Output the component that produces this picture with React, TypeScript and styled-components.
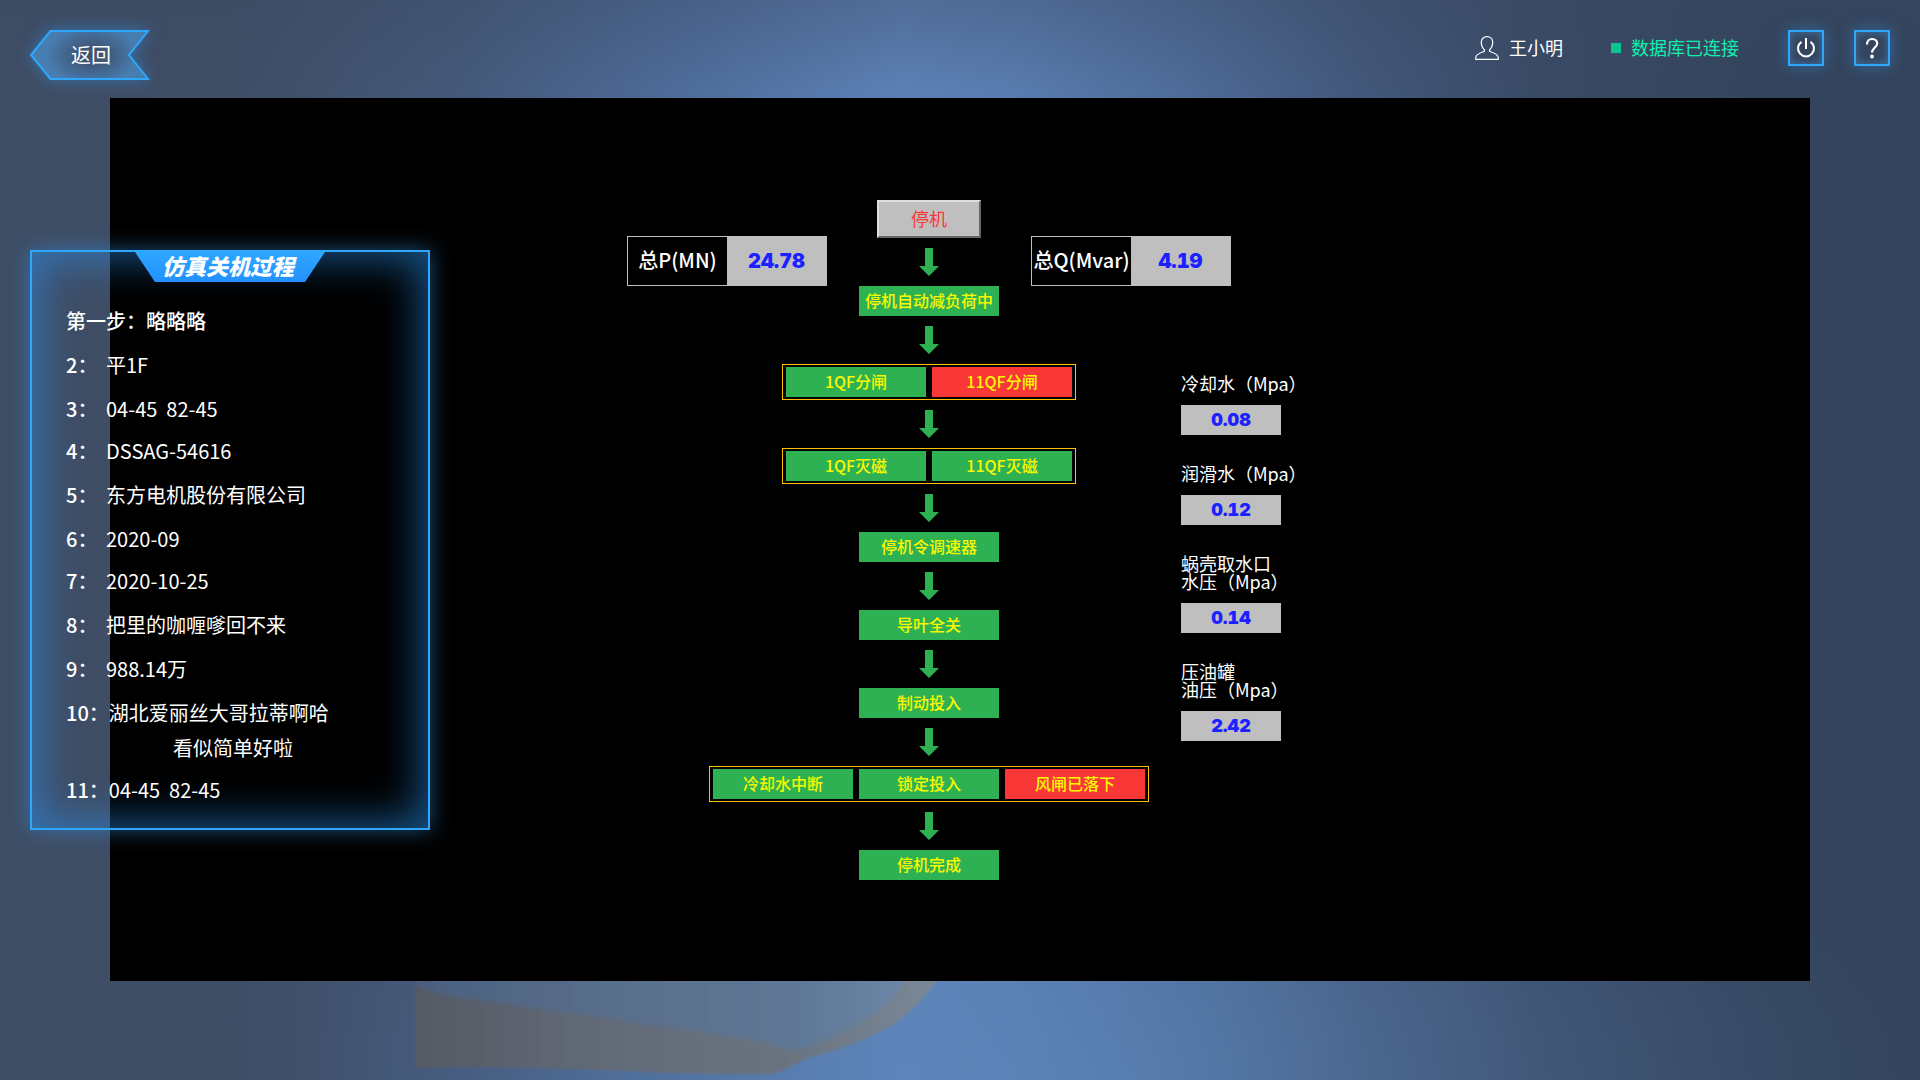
import React from "react";
import styled, { createGlobalStyle, css } from "styled-components";

const cjk = '"Noto Sans CJK SC", "Noto Sans", sans-serif';

const GlobalStyle = createGlobalStyle`
  *, *::before, *::after { box-sizing: border-box; }
  html, body, #root { height: 100%; margin: 0; }
  body { background: #3d4b63; color: #fff; font-family: ${cjk}; }
  button { font-family: inherit; cursor: pointer; }
  ul, ol, dl, dd { margin: 0; padding: 0; list-style: none; }
`;

const Page = styled.div`
  display: flex;
  flex-direction: column;
  position: relative;
  isolation: isolate;
  overflow: hidden;
  min-height: 100vh;
  background:
    linear-gradient(180deg, rgba(58, 72, 96, 0.35) 0, rgba(58, 72, 96, 0) 90px),
    radial-gradient(ellipse 42% 30% at 58% 100%, rgba(98, 146, 200, 0.4), rgba(98, 146, 200, 0)),
    linear-gradient(90deg, #3f4d65 0%, #3f4d66 12%, #44597a 24%, #4e6d9b 36%, #5c80b5 47%, #587bae 53%, #4d6b97 62%, #42577a 71%, #394a66 80%, #34445d 92%, #34445e 100%);
`;

const Backdrop = styled.svg`
  position: absolute;
  z-index: -1;
  left: 21%;
  bottom: 0;
  width: 560px;
  height: 120px;
`;

const Header = styled.header`
  display: flex;
  justify-content: space-between;
  align-items: flex-start;
  height: 98px;
  padding: 30px 30px 0;
`;

const BackButton = styled.button`
  position: relative;
  display: grid;
  place-items: center;
  width: 120px;
  height: 50px;
  padding: 0 0 0 2px;
  border: 0;
  background: none;
  color: #fff;
  font-size: 20px;
  line-height: 30px;
`;

const BackShape = styled.svg`
  position: absolute;
  inset: 0;
  z-index: -1;
  overflow: visible;
  filter: drop-shadow(0 0 8px rgba(46, 143, 220, 0.6));
`;

const Tools = styled.div`
  display: flex;
  align-items: center;
  height: 36px;
  font-size: 18px;
  line-height: 26px;
`;

const ToolText = styled.span`
  padding-bottom: 2px;
`;

const User = styled.div`
  display: flex;
  align-items: center;
  gap: 10px;
  margin-right: 48px;
`;

const Status = styled.div`
  display: flex;
  align-items: center;
  gap: 10px;
  margin-right: 49px;
  color: #0ff0ae;
  &::before {
    content: "";
    width: 10px;
    height: 10px;
    background: #0cc48f;
  }
`;

const IconButton = styled.button`
  display: grid;
  place-items: center;
  width: 36px;
  height: 36px;
  padding: 0;
  border: 2px solid #2ea7ff;
  background: transparent;
  color: #fff;
  box-shadow: 0 0 15px rgba(46, 143, 220, 0.5), inset 0 0 8px rgba(70, 150, 220, 0.6);
  & + & { margin-left: 30px; }
`;

const Stage = styled.main`
  display: flex;
  justify-content: center;
  align-items: flex-start;
  position: relative;
  flex: 1;
  margin: 0 110px 99px;
  padding-top: 102px;
  background: #000;
`;

const Board = styled.div`
  display: grid;
  grid-template-columns: 82px 118px 204px 118px 32px 112px;
  align-items: start;
  justify-items: center;
`;

const Flow = styled.ol`
  grid-area: 1 / 2 / 2 / 5;
  display: flex;
  flex-direction: column;
  align-items: center;
  gap: 10px;
`;

const FlowStep = styled.li`
  display: flex;
  flex-direction: column;
  align-items: center;
  gap: 10px;
`;

const StopButton = styled.button`
  width: 104px;
  height: 38px;
  padding: 0 0 2px;
  border: 2px solid;
  border-color: #dedede #666 #666 #dedede;
  background: #bfbfbf;
  color: #fa3737;
  font-size: 18px;
  line-height: 26px;
`;

const Node = styled.div<{ $alarm?: boolean }>`
  width: 140px;
  height: 30px;
  background: ${(p) => (p.$alarm ? "#fa3737" : "#2eb153")};
  color: #f8f800;
  font-size: 16px;
  font-weight: 500;
  line-height: 28px;
  text-align: center;
  white-space: nowrap;
`;

const NodeGroup = styled.div`
  display: flex;
  gap: 6px;
  padding: 2px 3px;
  border: 1px solid #ffc000;
`;

const Readout = styled.dl<{ $side: "left" | "right" }>`
  grid-area: ${(p) => (p.$side === "left" ? "1 / 1 / 2 / 3" : "1 / 4 / 2 / 7")};
  justify-self: start;
  display: flex;
  width: 200px;
  height: 50px;
  margin-top: 36px;
  border: 1px solid #bfbfbf;
  text-align: center;
  white-space: nowrap;
  font-size: 20px;
`;

const ReadoutLabel = styled.dt`
  flex: 1;
  font-weight: 500;
  line-height: 46px;
`;

const valueText = css`
  background: #bfbfbf;
  color: #1c22ff;
  font-family: Inter, "Liberation Sans", sans-serif;
  font-weight: 900;
  font-variant-numeric: tabular-nums;
  text-align: center;
`;

const ReadoutValue = styled.dd`
  ${valueText}
  width: 99px;
  line-height: 48px;
`;

const Metrics = styled.dl`
  grid-area: 1 / 6 / 2 / 7;
  justify-self: stretch;
  display: flex;
  flex-direction: column;
  gap: 29px;
  margin-top: 174px;
`;

const Metric = styled.div`
  display: flex;
  flex-direction: column;
  gap: 13px;
  font-size: 18px;
  line-height: 18px;
  white-space: pre;
`;

const MetricValue = styled.dd`
  ${valueText}
  width: 100px;
  line-height: 30px;
`;

const Panel = styled.aside`
  position: absolute;
  top: 250px;
  left: 30px;
  width: 400px;
  border: 2px solid #2ea7ff;
  padding: 0 34px 23px;
  box-shadow: 0 0 20px rgba(46, 143, 220, 0.55), inset 0 0 40px 8px rgba(40, 145, 240, 0.55);
  font-size: 20px;
  line-height: 30px;
`;

const PanelTitle = styled.h2`
  width: 190px;
  height: 30px;
  margin: 0 auto 24px;
  padding-right: 4px;
  clip-path: polygon(0 0, 100% 0, calc(100% - 20px) 100%, 20px 100%);
  background: linear-gradient(#2ea7ff, #2390ff);
  color: #fff;
  font-size: 22px;
  font-weight: 900;
  font-style: italic;
  line-height: 26px;
  text-align: center;
  white-space: nowrap;
`;

const StepGroups = styled.div`
  display: flex;
  flex-direction: column;
  gap: 12px;
`;

const StepGroup = styled.ul`
  display: flex;
  flex-direction: column;
  gap: 14px;
`;

const StepRow = styled.li<{ $strong?: boolean }>`
  display: flex;
  flex-wrap: wrap;
  row-gap: 5px;
  white-space: pre;
  font-weight: ${(p) => (p.$strong ? 500 : 400)};
`;

const StepNo = styled.span`
  min-width: 40px;
  font-weight: 500;
`;

const StepMore = styled.span`
  flex-basis: 100%;
  padding-left: 107px;
`;

type Cell = { text: string; alarm?: boolean };

const flow: Cell[][] = [
  [{ text: "停机自动减负荷中" }],
  [{ text: "1QF分闸" }, { text: "11QF分闸", alarm: true }],
  [{ text: "1QF灭磁" }, { text: "11QF灭磁" }],
  [{ text: "停机令调速器" }],
  [{ text: "导叶全关" }],
  [{ text: "制动投入" }],
  [{ text: "冷却水中断" }, { text: "锁定投入" }, { text: "风闸已落下", alarm: true }],
  [{ text: "停机完成" }],
];

const metrics = [
  { label: "冷却水（Mpa）", value: "0.08" },
  { label: "润滑水（Mpa）", value: "0.12" },
  { label: "蜗壳取水口\n水压（Mpa）", value: "0.14" },
  { label: "压油罐\n油压（Mpa）", value: "2.42" },
];

type Step = { no: string; text: string; more?: string; strong?: boolean };

const steps: Step[][] = [
  [
    { no: "第一步：", text: "略略略", strong: true },
    { no: "2：", text: "平1F" },
    { no: "3：", text: "04-45  82-45" },
  ],
  [
    { no: "4：", text: "DSSAG-54616" },
    { no: "5：", text: "东方电机股份有限公司" },
    { no: "6：", text: "2020-09" },
  ],
  [
    { no: "7：", text: "2020-10-25" },
    { no: "8：", text: "把里的咖喱嗲回不来" },
    { no: "9：", text: "988.14万" },
    { no: "10：", text: "湖北爱丽丝大哥拉蒂啊哈", more: "看似简单好啦" },
  ],
  [{ no: "11：", text: "04-45  82-45" }],
];

const Arrow = () => (
  <svg width="20" height="28" viewBox="0 0 20 28" aria-hidden="true">
    <path d="M6 0h8v18h6L10 28 0 18h6z" fill="#2eb153" />
  </svg>
);

const UserIcon = () => (
  <svg width="24" height="24" viewBox="0 0 24 24" fill="none" stroke="#fff" strokeWidth="1.2" strokeLinejoin="round" aria-hidden="true">
    <path d="M12 .7C8.600 .7 6.300 3 6.300 6.300c0 3 1.300 5.800 3 7.300.6 1 .1 1.700-1 2.200C4.700 17 .7 18.600 .7 22v1.300h22.600V22c0-3.400-4-5-7.600-6.200-1.100-.5-1.600-1.200-1-2.200 1.700-1.500 3-4.300 3-7.300C17.700 3 15.400 .7 12 .7z" />
  </svg>
);

const Blade = () => (
  <Backdrop viewBox="0 0 560 120" aria-hidden="true">
    <defs>
      <linearGradient id="blade" gradientUnits="userSpaceOnUse" x1="12" y1="0" x2="540" y2="0">
        <stop offset="0" stopColor="#555a65" />
        <stop offset="0.4" stopColor="#646c79" />
        <stop offset="0.72" stopColor="#6a7480" />
        <stop offset="1" stopColor="#7b8a99" />
      </linearGradient>
      <linearGradient id="bladeFace" gradientUnits="userSpaceOnUse" x1="12" y1="0" x2="500" y2="0">
        <stop offset="0" stopColor="#4b6080" />
        <stop offset="0.45" stopColor="#5a708c" />
        <stop offset="0.8" stopColor="#5f7896" />
        <stop offset="1" stopColor="#6c86a8" />
      </linearGradient>
      <filter id="edge"><feGaussianBlur stdDeviation="1" /></filter>
      <filter id="rim"><feGaussianBlur stdDeviation="2" /></filter>
    </defs>
    <path
      filter="url(#edge)"
      d="M12 108V0h536L534 21c-14 18-28 34-47 45-10 6-20 11-32 16-16 6-32 11-49 16-12 4-24 13-36 16-40 1-90-1-130-2-60-3-140-6-228-4z"
      fill="url(#blade)"
    />
    <path
      filter="url(#rim)"
      d="M13 25V0h493l-6 21c-3 8-8 13-13 19-12 12-24 20-40 28-20 10-36 19-52 22-8 1-12 1-20-3-12-6-40-9-71-14-60-9-110-16-172-25-40-6-100-12-119-23z"
      fill="url(#bladeFace)"
    />
  </Backdrop>
);

export default function App() {
  return (
    <Page>
      <GlobalStyle />
      <Blade />
      <Header>
        <BackButton type="button">
          <BackShape width="120" height="50" viewBox="0 0 120 50" aria-hidden="true">
            <defs>
              <radialGradient id="backFill" gradientUnits="userSpaceOnUse" cx="0" cy="0" r="1" gradientTransform="translate(62 25) scale(46 30)">
                <stop offset="0" stopColor="#3e4f6a" />
                <stop offset="0.35" stopColor="#415a7c" />
                <stop offset="1" stopColor="#477db0" />
              </radialGradient>
            </defs>
            <path d="M20.500 1H118L99 25l19 24H20.500L1 25z" fill="url(#backFill)" stroke="#2ea7ff" strokeWidth="2" />
          </BackShape>
          返回
        </BackButton>
        <Tools>
          <User>
            <UserIcon />
            <ToolText>王小明</ToolText>
          </User>
          <Status>
            <ToolText>数据库已连接</ToolText>
          </Status>
          <IconButton type="button" aria-label="电源">
            <svg width="20" height="22" viewBox="0 0 20 22" fill="none" stroke="#fff" strokeWidth="2" aria-hidden="true">
              <path d="M10 1v11M5.500 4.800a8 8 0 1 0 9 0" />
            </svg>
          </IconButton>
          <IconButton type="button" aria-label="帮助">
            <svg width="20" height="22" viewBox="0 0 20 22" fill="none" stroke="#fff" strokeWidth="2.200" aria-hidden="true">
              <path d="M5 7.500C5 4 7 2 10.200 2c3 0 5 2 5 4.600 0 3.600-5.200 4.400-5.200 8.900" />
              <circle cx="10" cy="19.500" r="1.900" fill="#fff" stroke="none" />
            </svg>
          </IconButton>
        </Tools>
      </Header>
      <Stage>
        <Board>
          <Readout $side="left">
            <ReadoutLabel>总P(MN)</ReadoutLabel>
            <ReadoutValue>24.78</ReadoutValue>
          </Readout>
          <Flow>
            <FlowStep>
              <StopButton type="button">停机</StopButton>
            </FlowStep>
            {flow.map((cells) => (
              <FlowStep key={cells[0].text}>
                <Arrow />
                {cells.length === 1 ? (
                  <Node>{cells[0].text}</Node>
                ) : (
                  <NodeGroup>
                    {cells.map((c) => (
                      <Node key={c.text} $alarm={c.alarm}>{c.text}</Node>
                    ))}
                  </NodeGroup>
                )}
              </FlowStep>
            ))}
          </Flow>
          <Readout $side="right">
            <ReadoutLabel>总Q(Mvar)</ReadoutLabel>
            <ReadoutValue>4.19</ReadoutValue>
          </Readout>
          <Metrics>
            {metrics.map((m) => (
              <Metric key={m.label}>
                <dt>{m.label}</dt>
                <MetricValue>{m.value}</MetricValue>
              </Metric>
            ))}
          </Metrics>
        </Board>
      </Stage>
      <Panel>
        <PanelTitle>仿真关机过程</PanelTitle>
        <StepGroups>
          {steps.map((group) => (
            <StepGroup key={group[0].no}>
              {group.map((s) => (
                <StepRow key={s.no} $strong={s.strong}>
                  <StepNo>{s.no}</StepNo>
                  <span>{s.text}</span>
                  {s.more && <StepMore>{s.more}</StepMore>}
                </StepRow>
              ))}
            </StepGroup>
          ))}
        </StepGroups>
      </Panel>
    </Page>
  );
}
